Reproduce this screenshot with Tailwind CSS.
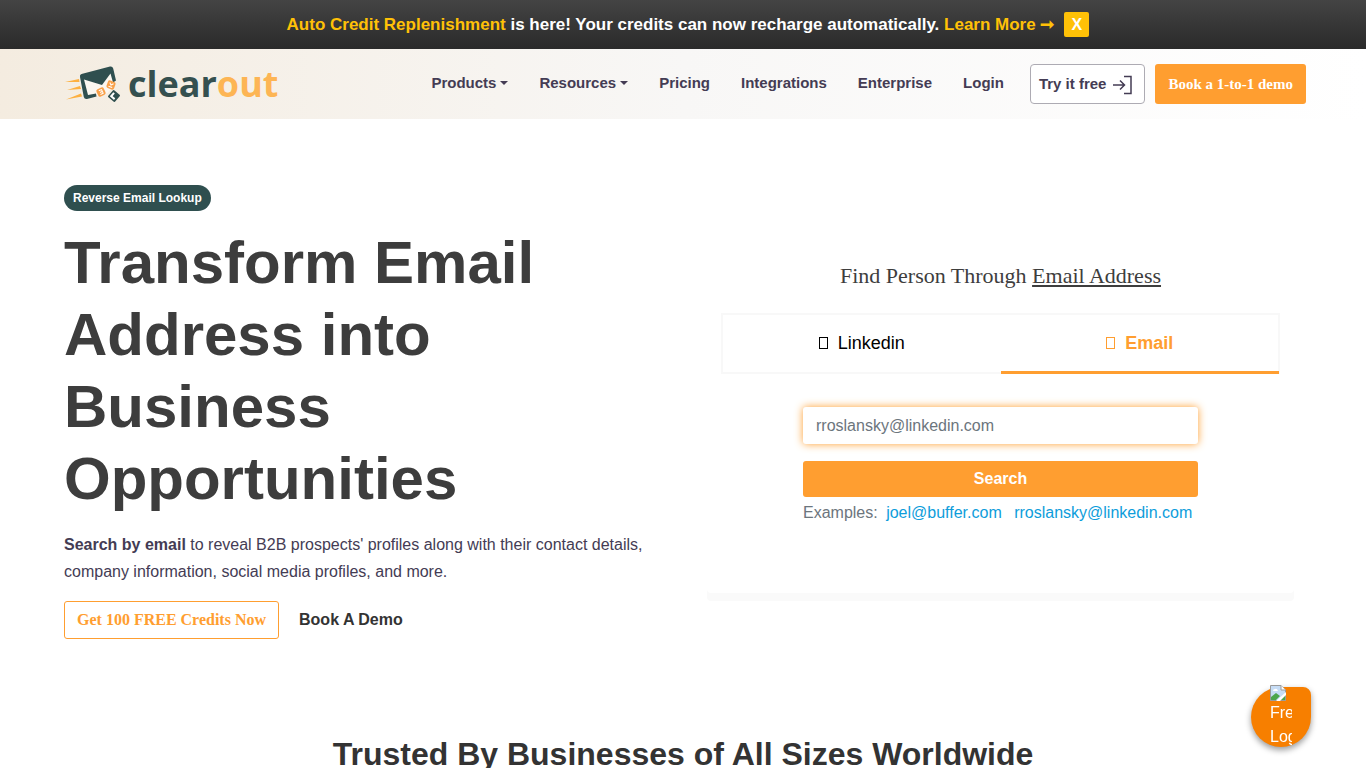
<!DOCTYPE html>
<html lang="en">
  <head>
    <meta charset="UTF-8" />
    <meta name="viewport" content="width=device-width, initial-scale=1.0" />
    <title>Reverse Email Lookup - Clearout</title>
    <script src="https://cdn.jsdelivr.net/npm/@tailwindcss/browser@4"></script>
  </head>

  <body class="bg-white font-['Liberation_Sans',Arial,sans-serif] text-base text-[#3d3d3d] overflow-x-hidden">
    <!-- Announcement bar -->
    <div
      class="flex items-center justify-center gap-[10px] h-[49px] pl-[10px] bg-linear-to-b from-[#444] to-[#2a2a2a] text-white text-[17px] font-bold"
    >
      <p>
        <span class="text-[#ffc107]">Auto Credit Replenishment</span>
        is here! Your credits can now recharge automatically.
        <a href="#" class="text-[#ffc107]">Learn More ➞</a>
      </p>
      <button class="size-[25px] rounded-xs bg-[#ffc107] text-base font-bold leading-none">X</button>
    </div>

    <!-- Navigation -->
    <header
      class="flex items-center justify-between h-[70px] pl-16 pr-[60px] bg-linear-to-r from-[#f4ece0] via-[#f8f7f6] to-white"
    >
      <a href="#" class="flex items-center gap-2">
        <svg class="w-[56px] h-[38px]" viewBox="0 0 56 38" fill="none">
          <path d="M1 17L15 14L15.500 17Z M3 25L16 21L17 24Z M2 34.500L17 28.500L18 31.500Z" fill="#fdb040" />
          <path d="M19 11L46 4L51 17L44 28L33 31L22 32Z" fill="#fbf7f0" />
          <path
            d="M17.500 9L46 1.500Q48.500 1 49.200 3.500L52 15.500L49 17.500L46.500 8.500L38 20L20 14.500L24 30L32 28.500L32.500 31.500L23 34Q20.500 34.500 19.800 32L16 12Q15.500 9.700 17.500 9Z"
            fill="#2f4f4f"
          />
          <g transform="rotate(20 47 20)">
            <rect x="43" y="16" width="8" height="8" rx="2" fill="#f9a14a" />
            <path d="M45 18L47 20L49 18M45 22H49" stroke="#fff" />
          </g>
          <g transform="rotate(-25 37 27)">
            <rect x="33" y="23" width="8" height="8" rx="2" fill="#f9a14a" />
            <path d="M35.500 25H38.500V29H35.500M36 27H38" stroke="#fff" />
          </g>
          <g transform="rotate(40 50 31)">
            <rect x="45.500" y="26.500" width="9" height="9" rx="1" fill="#2f4f4f" />
            <path d="M48 28.500V33H52.500" stroke="#fff" stroke-width="2" />
          </g>
        </svg>
        <span class="font-['Open_Sans',sans-serif] text-4xl leading-9 font-bold text-[#35504f]"
          >clear<span class="text-[#fdb554]">out</span></span
        >
      </a>

      <div class="flex items-center gap-[26px] text-[15px] font-bold text-[#443c54]">
        <nav class="flex items-center gap-[31px] pb-[2px]">
          <button class="flex items-center gap-1 font-bold">
            Products
            <svg class="w-2 h-1" viewBox="0 0 8 4" fill="currentColor"><path d="M0 0H8L4 4Z" /></svg>
          </button>
          <button class="flex items-center gap-1 font-bold">
            Resources
            <svg class="w-2 h-1" viewBox="0 0 8 4" fill="currentColor"><path d="M0 0H8L4 4Z" /></svg>
          </button>
          <a href="#">Pricing</a>
          <a href="#">Integrations</a>
          <a href="#">Enterprise</a>
          <a href="#">Login</a>
        </nav>
        <div class="flex gap-[10px]">
          <a href="#" class="flex items-center gap-[6px] h-10 pl-2 pr-3 border border-[#adabb3] rounded-sm bg-white">
            Try it free
            <svg class="w-5 h-5 mt-[2px]" viewBox="0 0 20 20" fill="none" stroke="currentColor" stroke-width="1.500">
              <path d="M1 10H12M8 5.500L12.500 10L8 14.500M12 1.500H19V18.500H12" />
            </svg>
          </a>
          <a
            href="#"
            class="flex items-center h-10 px-[13px] rounded-[3px] bg-[#ff9e30] text-white font-['Liberation_Serif',serif]"
            >Book a 1-to-1 demo</a
          >
        </div>
      </div>
    </header>

    <!-- Hero -->
    <main>
      <section class="grid grid-cols-2 gap-14 pl-16 pr-[72px] pt-[66px]">
        <div>
          <span class="inline-flex items-center h-[26px] px-[9px] rounded-full bg-[#2f4f4f] text-white text-xs font-bold"
            >Reverse Email Lookup</span
          >
          <h1 class="mt-4 text-[60px] leading-[72px] font-bold">Transform Email Address into Business Opportunities</h1>
          <p class="mt-4 leading-[27px] text-[#443c54]">
            <b>Search by email</b> to reveal B2B prospects' profiles along with their contact details, company
            information, social media profiles, and more.
          </p>
          <div class="flex items-center gap-5 mt-4 font-bold">
            <a
              href="#"
              class="flex items-center h-[38px] px-3 border border-[#ff9e30] rounded-[3px] text-[#ff9e30] font-['Liberation_Serif',serif]"
              >Get 100 FREE Credits Now</a
            >
            <a href="#" class="text-[#333]">Book A Demo</a>
          </div>
        </div>

        <div class="mt-[54px] h-[354px] px-[14px] pt-6 rounded-sm bg-white shadow-[0_8px_0_#fafafa]">
          <h2 class="text-center text-[22px] leading-[26px] font-['Liberation_Serif',serif]">
            Find Person Through <span class="underline underline-offset-2 decoration-2">Email Address</span>
          </h2>
          <div class="grid grid-cols-2 mt-6 h-[61px] border-2 border-[#f8f8f8] text-lg">
            <button class="flex items-center justify-center gap-[10px] pb-[2px] text-black">
              <span class="w-[9px] h-3 border border-current"></span>Linkedin
            </button>
            <button
              class="flex items-center justify-center gap-[10px] -mb-[2px] -mr-[1px] pb-[1px] border-b-3 border-[#ff9e30] text-[#ff9e30] font-bold"
            >
              <span class="w-[9px] h-3 border border-current"></span>Email
            </button>
          </div>
          <form class="max-w-[395px] mx-auto mt-[33px]">
            <input
              type="email"
              aria-label="Email address"
              placeholder="rroslansky@linkedin.com"
              class="block w-full h-[37px] px-[13px] rounded-[3px] bg-white placeholder:text-[#6c757d] shadow-[0_0_9px_#ff9e30] outline-none"
            />
            <button type="button" class="block w-full h-9 mt-[17px] rounded-[3px] bg-[#ff9e30] text-white font-bold">
              Search
            </button>
            <p class="mt-1 text-[#6c757d]">
              Examples:
              <a href="#" class="ml-1 text-[#0d9ddb]">joel@buffer.com</a>
              <a href="#" class="ml-2 text-[#0d9ddb]">rroslansky@linkedin.com</a>
            </p>
          </form>
        </div>
      </section>

      <section class="pt-24">
        <h2 class="text-center text-[32px] leading-[38px] font-bold text-[#333]">
          Trusted By Businesses of All Sizes Worldwide
        </h2>
      </section>
    </main>

    <!-- Chat launcher -->
    <button
      class="fixed right-[55px] bottom-[21px] size-[60px] rounded-[30px] rounded-tr-lg bg-[#f77f00] text-white text-left shadow-[0_3px_6px_rgba(0,0,0,0.4)]"
    >
      <span class="block w-[22px] h-[61px] mx-auto -mt-[3px] overflow-hidden leading-6">
        <svg class="w-4 h-4" viewBox="0 0 16 16">
          <path d="M.5 .5H11L15.500 5V15.500H.5Z" fill="#c6dcf5" stroke="#9a9a9a" />
          <path d="M11 .5V5H15.500" fill="#fff" stroke="#9a9a9a" />
          <path d="M3 6Q3 4 5 4Q7 3 8 6Z" fill="#fff" />
          <path d="M1 15V12L6 8L10 11L6 15Z M9 15L15 9V15Z" fill="#4ca64c" />
          <path d="M6 16L16 7V10L10 16Z" fill="#fff" />
        </svg>
        Fresh Logo
      </span>
    </button>
  </body>
</html>
